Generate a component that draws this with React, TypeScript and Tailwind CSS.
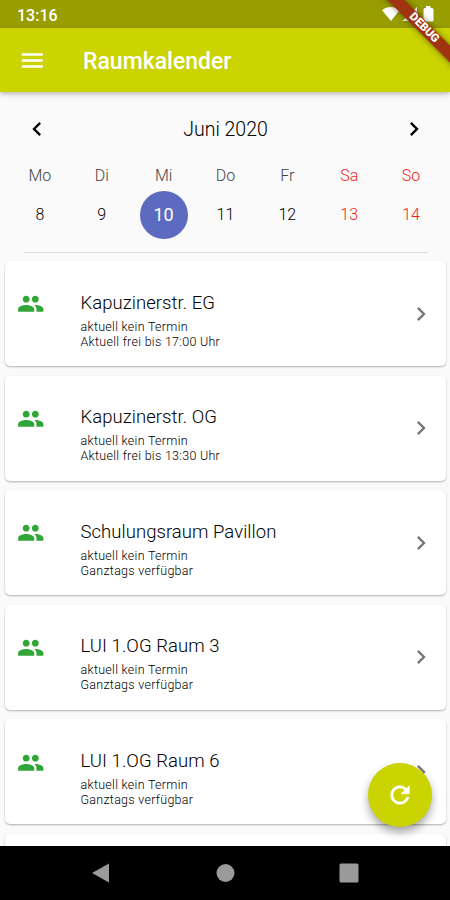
import { MdPeople, MdChevronLeft, MdChevronRight } from 'react-icons/md';

interface Day {
  name: string;
  date: number;
  weekend?: boolean;
  selected?: boolean;
}

interface Room {
  name: string;
  current: string;
  availability: string;
}

const days: Day[] = [
  { name: 'Mo', date: 8 },
  { name: 'Di', date: 9 },
  { name: 'Mi', date: 10, selected: true },
  { name: 'Do', date: 11 },
  { name: 'Fr', date: 12 },
  { name: 'Sa', date: 13, weekend: true },
  { name: 'So', date: 14, weekend: true },
];

const rooms: Room[] = [
  { name: 'Kapuzinerstr. EG', current: 'aktuell kein Termin', availability: 'Aktuell frei bis 17:00 Uhr' },
  { name: 'Kapuzinerstr. OG', current: 'aktuell kein Termin', availability: 'Aktuell frei bis 13:30 Uhr' },
  { name: 'Schulungsraum Pavillon', current: 'aktuell kein Termin', availability: 'Ganztags verfügbar' },
  { name: 'LUI 1.OG Raum 3', current: 'aktuell kein Termin', availability: 'Ganztags verfügbar' },
  { name: 'LUI 1.OG Raum 6', current: 'aktuell kein Termin', availability: 'Ganztags verfügbar' },
];

const StatusBar = () => (
  <div className="flex h-7 shrink-0 items-center justify-between bg-[#989d00] pr-[14px] pl-[17px] text-white">
    <span className="pt-[3px] text-base font-medium">13:16</span>
    <svg className="h-7 w-[54px]" viewBox="0 0 54 28" fill="currentColor">
      <path d="M0 10.200C5.500 6 12 6 17.500 10.200L9 21Z" />
      <path d="M35 7v14H20.500Z" />
      <path d="M44 8v-2h4.500v2h1.500q1.500 0 1.500 1.500V20q0 1.500-1.500 1.500h-7q-1.500 0-1.500-1.500V9.500q0-1.500 1.500-1.500Z" />
    </svg>
  </div>
);

const AppBar = () => (
  <header className="z-10 flex h-16 shrink-0 items-center bg-[#cbd300] pl-[18px] text-white shadow-[0_2px_5px_rgba(0,0,0,0.28)]">
    <button aria-label="Menu">
      <svg className="size-7" viewBox="0 0 28 28" fill="currentColor">
        <path d="M3.800 7.200h21v2.600h-21ZM3.800 13.200h21v2.600h-21ZM3.800 19.200h21v2.600h-21Z" />
      </svg>
    </button>
    <h1 className="pt-1 pl-[37px] text-[23px] font-medium">Raumkalender</h1>
  </header>
);

const WeekCalendar = () => (
  <section className="shrink-0 px-[9px]">
    <div className="flex h-[74px] items-center justify-between pr-[13px] pl-3.5">
      <button aria-label="Zurück">
        <MdChevronLeft className="size-7" />
      </button>
      <span className="pt-0.5 text-[19.500px] font-light text-black">Juni 2020</span>
      <button aria-label="Weiter">
        <MdChevronRight className="size-7" />
      </button>
    </div>
    <div className="-mr-px grid grid-cols-7">
      {days.map((day) => (
        <div
          key={day.name}
          className={`flex flex-col items-center text-base font-light ${day.weekend ? 'text-[#f4251a]' : 'text-black'}`}
        >
          <span className={`flex h-5 items-center ${day.weekend ? '' : 'text-[#444]'}`}>{day.name}</span>
          <span
            className={`mt-[5px] flex size-12 items-center justify-center rounded-full ${
              day.selected ? 'bg-[#5c6bc0] text-lg font-normal text-white' : ''
            }`}
          >
            {day.date}
          </span>
        </div>
      ))}
    </div>
    <hr className="mt-[13px] mr-[13px] ml-[15px] border-[#dcdcdc]" />
  </section>
);

const RoomCard = ({ room }: { room: Room }) => (
  <li className="flex h-[105px] shrink-0 items-center rounded-[5px] bg-white pr-[11px] pl-[11.500px] shadow-[0_1px_2px_rgba(0,0,0,0.3)]">
    <MdPeople className="mb-[19px] size-[27.500px] text-[#2fa637]" />
    <div className="flex-1 pt-3 pl-[36.500px]">
      <h2 className="text-[18.500px] leading-6 font-light tracking-[0.05px] text-black">{room.name}</h2>
      <p className="pt-1 text-[12.500px] leading-[15px] font-light tracking-[0.28px] text-black">
        {room.current}
        <br />
        {room.availability}
      </p>
    </div>
    <MdChevronRight className="size-7 text-[#777]" />
  </li>
);

const NavigationBar = () => (
  <nav className="z-20 flex h-[54px] shrink-0 items-center justify-between bg-black px-[91px] text-[#9a9a9a]">
    <svg className="size-5" viewBox="0 0 20 20" fill="currentColor">
      <path d="M18 0.500v19L1 10Z" />
    </svg>
    <svg className="size-5" viewBox="0 0 20 20" fill="currentColor">
      <circle cx="10.500" cy="10" r="9" />
    </svg>
    <svg className="size-5" viewBox="0 0 20 20" fill="currentColor">
      <rect x="0.500" y="0.500" width="19" height="19" rx="1.500" />
    </svg>
  </nav>
);

export default function App() {
  return (
    <div className="relative flex h-[900px] w-[450px] flex-col overflow-hidden bg-[#fafafa] font-[Roboto,sans-serif]">
      <StatusBar />
      <AppBar />
      <WeekCalendar />
      <ul className="flex min-h-0 flex-1 flex-col gap-[9.600px] overflow-hidden pt-2 pr-1 pl-[5px]">
        {rooms.map((room) => (
          <RoomCard key={room.name} room={room} />
        ))}
        <li className="h-[105px] shrink-0 rounded-[5px] bg-white shadow-[0_1px_2px_rgba(0,0,0,0.3)]" />
      </ul>
      <NavigationBar />

      {/* Floating refresh button */}
      <button
        aria-label="Aktualisieren"
        className="absolute right-[18px] bottom-[73px] z-10 flex size-16 items-center justify-center rounded-full bg-[#cbd300] text-white shadow-[0_5px_9px_rgba(0,0,0,0.35)]"
      >
        <svg className="size-7" viewBox="0 0 24 24" fill="currentColor">
          <path d="M17.650 6.350A7.960 7.960 0 0 0 12 4a8 8 0 1 0 7.730 10h-2.080A6 6 0 1 1 12 6c1.660 0 3.140.690 4.220 1.780L13 11h7V4z" stroke="currentColor" strokeWidth="0.5" />
        </svg>
      </button>

      {/* Debug ribbon */}
      <div className="absolute top-[22px] left-[364px] z-20 flex h-3 w-[120px] rotate-45 items-center justify-center bg-[#a13410] text-[11.500px] font-black text-white shadow-[0_0_6px_rgba(0,0,0,0.5)]">
        DEBUG
      </div>
    </div>
  );
}
